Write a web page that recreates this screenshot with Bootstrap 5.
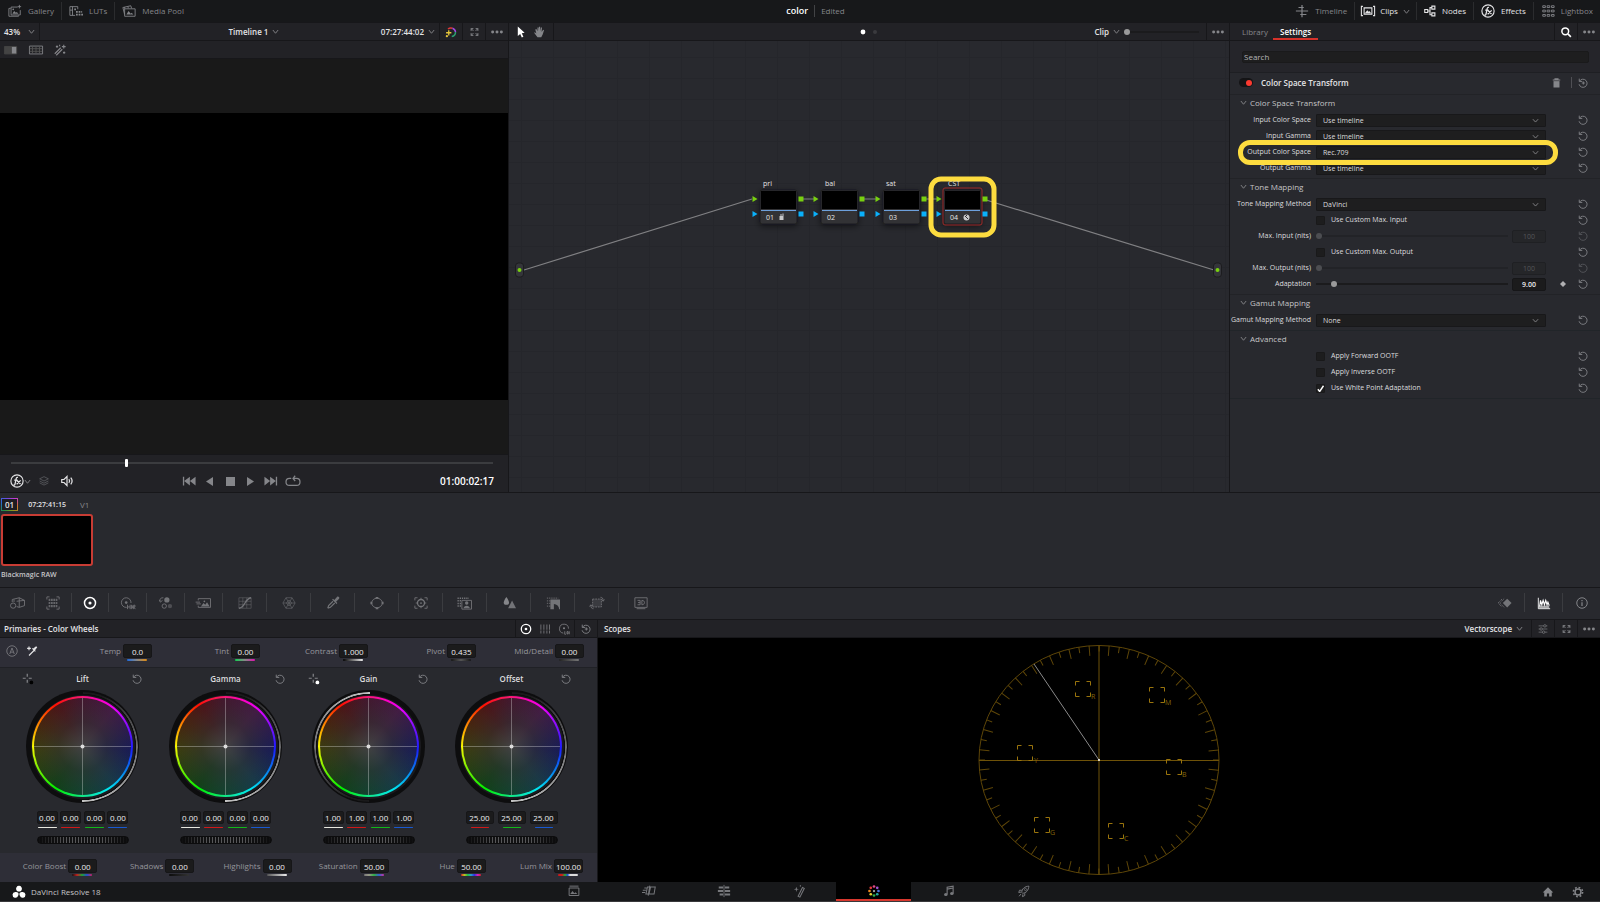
<!DOCTYPE html>
<html lang="en" data-bs-theme="dark">
<head>
<meta charset="utf-8">
<meta name="viewport" content="width=device-width, initial-scale=1">
<title>color - DaVinci Resolve 18</title>
<link href="https://cdn.jsdelivr.net/npm/bootstrap@5.3.0/dist/css/bootstrap.min.css" rel="stylesheet">
<style>
:root{--edge:#17171a;--bar:#222226;--panel:#28292e;--strip:#2e2e37;--dim:#85868a;--lit:#e4e4e6}
body{font:8px/12px "Open Sans","Noto Sans",sans-serif;background:var(--panel);color:#c4c4c6}
button,input,select{font:inherit;color:inherit}
button{background:none;border:0;padding:0;display:inline-flex;align-items:center;justify-content:center;flex:none}
a{color:inherit;text-decoration:none}
svg{display:block;flex:none;overflow:visible}
.ico{width:14px;height:14px;fill:none;stroke:currentColor;stroke-width:1}
.f{fill:currentColor;stroke:none}
.ico-s{width:12px;height:12px}
.ico-r{width:10px}
.ico-x{width:9px}
.chev{width:7px;height:7px;fill:none;stroke:#8a8a8e;stroke-width:1}
.semi{font-weight:600}
.lit{color:var(--lit)}
.white{color:#fff}
.dim{color:var(--dim)}
.faint{color:#6c6d72}
.topbar{height:22px;background:#17181a;padding-left:1px}
.topbar button{gap:6px;padding:0 7px;height:18px}
.topbar button+button{border-left:1px solid #2b2c2e}
.topbar .tight{gap:5px;padding:0 6px}
.project{gap:6px;padding-left:30px}
.project strong{font-size:9px}
.thirds{display:grid;grid-template-columns:1fr auto 1fr;align-items:center}
.bar{height:19px;background:var(--bar);border-top:1px solid var(--edge);border-bottom:1px solid var(--edge)}
.bar .cell{align-self:stretch;border-left:1px solid var(--edge);width:23px}
.bar .cell-end{width:1px}
.bar .modes{width:59px}
.upper{flex:1 1 470px;min-height:470px}
.viewer{flex:0 0 509px;border-right:1px solid var(--edge)}
.viewtools{height:18px;background:var(--bar);border-bottom:1px solid var(--edge);gap:11px;padding:0 4px}
.screen{background:#191919;flex:1;display:flex;align-items:center}
.screen div{background:#000;width:100%;aspect-ratio:509/287}
.transport{height:38px;background:var(--bar);border-top:1px solid var(--edge)}
.transport .thirds{height:18px;margin-top:4px;padding:0 14px 0 10px}
.timecode{font-size:10px}
.playgroup{gap:8px;padding-right:22px}
.graph{background-color:var(--panel);background-image:linear-gradient(90deg,#25262b 1px,transparent 1px),linear-gradient(#25262b 1px,transparent 1px);background-size:32px 21px;background-position:12px 16px;flex:1;min-height:0}
.graph svg{width:100%;height:100%}
.graph text{font-size:7px;fill:#e6e6e8;font-weight:500}
.inspector{flex:0 0 371px;background:var(--panel);border-left:1px solid var(--edge)}
.tab-on{border-bottom:2px solid #d6322a;align-self:stretch;padding:2px 7px 0}
.searchbox{padding:10px 11px 9px 12px;background:#25252a;border-bottom:1px solid #1e1f23}
.search{background:#1e1e1f;border:1px solid #1a1a1b;height:12px;border-radius:2px;padding:0 1px;width:100%}
.search::placeholder{color:#b4b4b6;opacity:1}
.fxhead{height:21px;padding:0 12px 2px 9px}
.fxhead h2{font-size:8px;margin:0}
.fxhead .vr{margin:4px 6px 4px 10px}
.toggle{width:14px;height:9px;border-radius:5px;background:#141416;display:flex;justify-content:flex-end;align-items:center;padding:1px}
.toggle i{width:6px;height:6px;border-radius:50%;background:#fb3a30}
.sect{border-top:1px solid #222327;padding-bottom:2px}
.sect h3{font:inherit;color:inherit;height:17px;margin:0 0 0 10px;padding-bottom:2px;display:flex;align-items:center;gap:3px}
.prop{display:grid;grid-template-columns:81px 230px 1fr;column-gap:5px;height:16px;align-items:center;margin:0 12px 0 0;font-size:7px;color:#dcdcde;font-weight:500}
.prop>:first-child{text-align:right;white-space:nowrap;font-weight:400}
.prop>:last-child{justify-self:end;display:flex;gap:12px;align-items:center;color:#85868a}
.prop select{appearance:none;width:100%;height:13px;line-height:11px;padding:0 6px;background:#1e1e1f url("data:image/svg+xml,%3Csvg xmlns='http://www.w3.org/2000/svg' viewBox='0 0 8 8'%3E%3Cpath d='M1 2.5 4 5.8 7 2.5' fill='none' stroke='%238a8a8e'/%3E%3C/svg%3E") no-repeat right 6px center/7px;border:1px solid #18181a;border-radius:1px}
.tick{display:flex;align-items:center;gap:6px}
.tick input{appearance:none;width:9px;height:9px;margin:0;background:#1d1d1e;border:1px solid #19191a;border-radius:1px}
.tick input:checked{background:#1d1d1e url("data:image/svg+xml,%3Csvg xmlns='http://www.w3.org/2000/svg' viewBox='0 0 8 8'%3E%3Cpath d='M1.3 4.5 3 6.6 6.6 1.2' fill='none' stroke='white' stroke-width='1.3'/%3E%3C/svg%3E") center/8px no-repeat}
input[type=range]{appearance:none;background:none;height:10px;margin:0;min-width:0}
input[type=range]::-webkit-slider-runnable-track{height:2px;background:#1b1b1d}
input[type=range]::-webkit-slider-thumb{appearance:none;width:6px;height:6px;border-radius:50%;background:#9a9a9b;margin-top:-2px}
input[type=range]:disabled::-webkit-slider-thumb{background:#4c4d51}
input[type=range]:disabled::-webkit-slider-runnable-track{background:#222327}
input[type=range].scrub{margin:3px 15px 0 11px}
input.scrub::-webkit-slider-runnable-track{background:#3b3c3f}
input.scrub::-webkit-slider-thumb{width:3px;height:8px;border-radius:1px;background:#fff;margin-top:-3px}
input[type=range].nodezoom{width:75px;margin:0 7px 0 4px}
.num{width:29px;height:14px;text-align:center;background:#1b1b1c;border:1px solid #161618;border-radius:2px;padding:0;color:#ececee}
.num-l{width:34px;height:13px}
.num:disabled{background:#252629;border-color:#1f2023;color:#55565a}
.clips{height:95px;border-top:1px solid var(--edge);padding:5px 1px 0}
.cliphead{height:13px;gap:10px}
.small-t{font-size:7px}
.clipno{padding:1px 3px;line-height:9px;border:1px solid;border-image:conic-gradient(from 45deg,#c43ad0,#d07a20,#7a9a20,#20904a,#2868d8,#7a4ae0,#c43ad0) 1;background:#1c1c22}
.thumb{width:92px;height:52px;background:#000;border:2px solid #c83c34;border-radius:3px;margin:3px 0}
.palettes{height:32px;border-top:1px solid var(--edge);color:#737478;padding-bottom:2px}
.palettes button{width:44px;height:19px;border-left:1px solid #3b3c40}
.palettes .n{width:37px}
.palettes .w{width:38px}
.palettes button.first{border-left:0;width:34px}
.palettes .right button:first-child{border-left:0}
.primaries{flex:0 0 598px;border-right:1px solid var(--edge)}
.strip{height:29px;background:var(--strip);padding:0 14px 3px 0}
.strip-top{padding:0 13px 3px 6px}
.strip-tools{width:38px}
.strip label{display:flex;justify-content:flex-end;align-items:center;gap:2px;color:#96969c;flex:1 1 0}
.fld{position:relative;display:block}
.fld::after{content:"";position:absolute;left:4px;right:5px;bottom:-3px;height:2px;border-radius:1px;background:var(--g)}
.fld .num{display:block}
.wheels{display:grid;grid-template-columns:repeat(4,1fr);padding:0 14px 0 11px;border-top:1px solid #202126;height:186px}
.wheelhead{display:grid;grid-template-columns:34px 1fr 34px;width:100%;height:22px;align-items:center;justify-items:center;color:#dcdcde}
.disc{width:113px;height:113px;border-radius:50%;background:#0d0d0e;display:grid;place-items:center}
.disc>*{grid-area:1/1;border-radius:50%}
.arc{width:110px;height:110px;background:conic-gradient(#1a1a1b 0 20deg,#7a7a7c 100deg,#c4c4c4 181deg,transparent 181deg);-webkit-mask:radial-gradient(closest-side,transparent 96%,#000 97%)}
.arc-up{transform:rotate(180deg)}
.gap-ring{width:104px;height:104px;background:#1b1b1f}
.hue{width:101px;height:101px;background:conic-gradient(#f81878,#ff00c0 20deg,#e800ff 42deg,#7a10ff 68deg,#1c1cff 92deg,#0a70f0 115deg,#00e8f0 150deg,#10e890 178deg,#00f000 212deg,#80f000 245deg,#f8f800 270deg,#ff8000 298deg,#ff1000 326deg,#f81878)}
.core{width:97px;height:97px;background:radial-gradient(closest-side,#424142,rgba(50,50,50,.55) 50%,transparent),conic-gradient(#42182f,#431c44 40deg,#231c50 80deg,#191c55 95deg,#163a4a 140deg,#124230 180deg,#124018 215deg,#3a3d10 265deg,#47240f 300deg,#4c1418 330deg,#42182f)}
.cross{width:97px;height:97px;stroke:#fff;stroke-opacity:.3}
.vals{display:flex;justify-content:space-between;width:92px;margin-top:8px}
.vals .num{width:21px;height:13px}
.vals .fld::after{left:1px;right:1px;bottom:-4px;height:1px}
.wide-vals .num{width:28px}
.wide-vals .fld::after{left:5px;right:5px}
.jog{width:92px;height:8px;border-radius:4px;margin-top:12px;background:linear-gradient(90deg,#0c0c0d,transparent 30%,transparent 70%,#0c0c0d),repeating-linear-gradient(90deg,#121213 0 1px,#58585a 1px 2px,#121213 2px 3px);border:1px solid #0c0c0d}
.scope{background:#000;flex:1;min-height:0}
.scope svg{width:100%;height:100%}
.scope text{font-size:7px;fill:#866508;stroke:none}
.scopebar{padding-left:6px}
.taskbar{height:20px;background:#17181a;border-bottom:1px solid #38393b;color:#77787c}
.brand{gap:5px;padding-left:12px;color:#c4c4c6}
.sys{gap:18px;padding-right:16px}
.taskbar nav{padding-right:3px}
.taskbar nav a{width:75px;height:19px;display:flex;align-items:center;justify-content:center;border-bottom:2px solid transparent}
.taskbar nav a.on{background:#000;border-color:#d8382e}
.mark-row{position:absolute;border:5px solid #fddc3f;border-radius:12px;pointer-events:none;left:-78px;right:-12px;top:-6px;bottom:-6px}
</style>
</head>
<body class="d-flex flex-column min-vh-100">
<svg width="0" height="0" class="position-absolute" aria-hidden="true">
<defs>
<symbol id="chev" viewBox="0 0 8 8"><path d="M1 2.3 4 6 7 2.3"/></symbol>
<symbol id="reset" viewBox="0 0 16 16"><path d="M2.500 5a6.500 6.500 0 1 1-.8 5M2 1V5.500H6.800" stroke-width="1.400"/></symbol>
<symbol id="resetdot" viewBox="0 0 16 16"><path d="M2.500 5a6.500 6.500 0 1 1-.8 5M2 1V5.500H6.800M6 8h5M8.500 5.500v5" stroke-width="1.400"/></symbol>
<symbol id="dots" viewBox="0 0 16 16"><circle class="f" cx="3" cy="8" r="1.700"/><circle class="f" cx="8" cy="8" r="1.700"/><circle class="f" cx="13" cy="8" r="1.700"/></symbol>
<symbol id="expand" viewBox="0 0 16 16"><path d="M2 6V2h4M10 2h4v4M14 10v4h-4M6 14H2v-4M2 2l4 4M14 2l-4 4M14 14l-4-4M2 14l4-4" stroke-width="1.700"/></symbol>
<symbol id="fx" viewBox="0 0 16 16"><circle cx="8" cy="8" r="7" stroke-width="1.300"/><path d="M3.800 12.500c1.500.8 1.900-.6 2.200-2l1-5c.3-1.600 1-2 2.200-1.600M4.800 7h3.700M8 7.500l4 4M12.200 7.300 7.600 11.700" stroke-width="1.500"/></symbol>
<symbol id="target" viewBox="0 0 16 16"><circle cx="8" cy="8" r="6.300" stroke-width="1.700"/><circle class="f" cx="8" cy="8" r="1.800"/></symbol>
<symbol id="pick" viewBox="0 0 16 16"><path d="M7 1v4M7 9v4M1 7h4M9 7h4" stroke-width="1.600"/></symbol>
</defs></svg>

<header class="topbar thirds">
 <div class="d-flex align-items-center">
  <button class="dim"><svg class="ico" viewBox="0 0 16 16"><path d="M3 5H1v9h11v-1M3.500 3.500H11M14 7v5.500H3.500v-9M13 1v4M11 3h4"/><path class="f" d="m5 11 2-3 2 2 1-1 2 2z"/><circle class="f" cx="6" cy="6" r="1"/></svg>Gallery</button>
  <button class="dim"><svg class="ico" viewBox="0 0 16 16"><path d="M7 13H1V3h9v3M4 3v10M1 7h3"/><path class="f" d="M6 5h2v2H6zM8 8h2v2H8zM11 8h2v2h-2zM8 11h2v2H8zM11 11h2v2h-2zM14 11h2v2h-2zM14 8h1v2h-1z"/></svg>LUTs</button>
  <button class="dim"><svg class="ico" viewBox="0 0 16 16"><path d="M3 12 1 4l9-2 1 3M3 5.500h12V14H3zM3 3.500v2M7 3v2"/><path class="f" d="m5 12 2.500-4L10 11l1-1 2 2z"/></svg>Media Pool</button>
 </div>
 <div class="project d-flex align-items-center"><strong class="semi white">color</strong><span class="vr"></span><span class="dim">Edited</span></div>
 <div class="d-flex align-items-center justify-content-end">
  <button class="dim"><svg class="ico" viewBox="0 0 16 16"><path d="M1 8h14M4 4h6M6 12h7M8 1v14" stroke-width="1.400"/></svg>Timeline</button>
  <button class="lit tight"><svg class="ico" viewBox="0 0 18 16"><path d="M2.500 2H.5v12h2M15.500 2h2v12h-2M4 4h10v8H4z" stroke-width="1.400"/><path class="f" d="m5 11 3-4 2 2 1-1 2 3z"/></svg>Clips <svg class="chev"><use href="#chev"/></svg></button>
  <button class="lit"><svg class="ico ico-s" viewBox="0 0 16 16"><path d="M5 8h3M8 8V3.500h2M8 8v5h2M1 6h4v4H1zM10.500 1.500h4v4h-4zM10.500 10.500h4v4h-4z" stroke-width="1.500"/></svg>Nodes</button>
  <button class="lit"><svg class="ico"><use href="#fx"/></svg>Effects</button>
  <button class="dim"><svg class="ico" viewBox="0 0 16 16"><path d="M2 2h3v2H2zM7 2h3v2H7zM12 2h3v2h-3zM2 7h3v2H2zM7 7h3v2H7zM12 7h3v2h-3zM2 12h3v2H2zM7 12h3v2H7zM12 12h3v2h-3z"/></svg>Lightbox</button>
 </div>
</header>

<main class="upper d-flex">
 <section class="viewer d-flex flex-column">
  <div class="bar thirds semi lit">
   <div class="d-flex align-items-center align-self-stretch"><button class="gap-2 ps-1 pe-1">43% <svg class="chev"><use href="#chev"/></svg></button><span class="cell cell-end"></span></div>
   <button class="gap-1">Timeline 1 <svg class="chev"><use href="#chev"/></svg></button>
   <div class="d-flex align-items-center align-self-stretch justify-content-end">
    <button class="gap-1 pe-1">07:27:44:02 <svg class="chev"><use href="#chev"/></svg></button>
    <button class="cell" aria-label="Bypass grades"><svg class="ico ico-s" viewBox="0 0 16 16"><path d="M4 4a6 6 0 0 1 6-1" stroke="#e03a3a" stroke-width="2"/><path d="M10 3a6 6 0 0 1 4 5" stroke="#a04ae0" stroke-width="2"/><path d="M14 8a6 6 0 0 1-5 6" stroke="#2aa070" stroke-width="2"/><path d="M5 5.500v7M1.500 9h7" stroke="#e6c63a" stroke-width="1.700"/><circle cx="2.500" cy="13.500" r="1.500" fill="#e6c63a" stroke="none"/></svg></button>
    <button class="cell dim" aria-label="Expand viewer"><svg class="ico ico-x"><use href="#expand"/></svg></button>
    <button class="cell dim" aria-label="Viewer options"><svg class="ico"><use href="#dots"/></svg></button>
   </div>
  </div>
  <div class="viewtools d-flex align-items-center dim">
   <button aria-label="Split screen"><svg class="ico" viewBox="0 0 16 12"><path d="M.5 2h14v8.500H.5z" stroke="#444" fill="#444"/><path class="f" d="M9 2.500h5v7.500H9z"/></svg></button>
   <button aria-label="Grid"><svg class="ico" viewBox="0 0 16 12"><path d="M.5 1.500h15v9H.5z"/><path d="M4 2v8M8 2v8M12 2v8M1 4.500h14M1 7.500h14" stroke="#555"/></svg></button>
   <button aria-label="Highlight"><svg class="ico ico-s" viewBox="0 0 16 16"><path d="m1 13 8-8M3 15l8-8M13 1v5M10.500 3.500h5M4 2v3M2.500 3.500h3M13.500 10v3M12 11.500h3M7.500 1v2" stroke-width="1.500"/></svg></button>
  </div>
  <div class="screen"><div></div></div>
  <div class="transport d-flex flex-column">
   <input type="range" class="scrub" aria-label="Playhead" min="0" max="1000" value="237">
   <div class="thirds">
    <div class="d-flex align-items-center gap-2">
     <button class="lit" aria-label="Effects"><svg class="ico"><use href="#fx"/></svg><svg class="chev"><use href="#chev"/></svg></button>
     <button class="faint" aria-label="Layers"><svg class="ico ico-r" viewBox="0 0 16 16"><path d="m8 1 7 3.500L8 8 1 4.500zM1 8l7 3.500L15 8M1 11l7 3.500 7-3.500"/></svg></button>
     <button class="lit ms-1" aria-label="Volume"><svg class="ico ico-s" viewBox="0 0 16 16"><path d="M1 6h3l4-4v12l-4-4H1zM10.500 5.500c1.200 1.500 1.200 3.500 0 5M13 3.500c2 2.500 2 6.500 0 9" stroke-width="1.600"/></svg></button>
    </div>
    <div class="playgroup d-flex align-items-center dim">
     <button aria-label="First frame"><svg class="ico" viewBox="0 0 16 12"><path class="f" d="M1 1h1.500v10H1zM9 1v10L2.500 6zM15.500 1v10L9 6z"/></svg></button>
     <button aria-label="Play reverse"><svg class="ico ico-s" viewBox="0 0 12 12"><path class="f" d="M9 2v9L2 6.500z"/></svg></button>
     <button aria-label="Stop"><svg class="ico ico-s" viewBox="0 0 12 12"><path class="f" d="M2 2h9v9H2z"/></svg></button>
     <button aria-label="Play"><svg class="ico ico-s" viewBox="0 0 12 12"><path class="f" d="M3 2v9l7-4.500z"/></svg></button>
     <button aria-label="Last frame"><svg class="ico" viewBox="0 0 16 12"><path class="f" d="M15 1h-1.500v10H15zM7 1v10l6.500-5zM.5 1v10L7 6z"/></svg></button>
     <button aria-label="Loop"><svg class="ico" viewBox="0 0 16 14"><path d="M6 4H4a3.500 3.500 0 0 0 0 8h8a3.500 3.500 0 0 0 0-8H8.500M10.500 1 8 4l2.500 3" stroke-width="1.400"/></svg></button>
    </div>
    <span class="timecode semi white text-end">01:00:02:17</span>
   </div>
  </div>
 </section>

 <section class="d-flex flex-column flex-grow-1" style="min-width:0">
  <div class="bar thirds">
   <div class="d-flex align-items-center align-self-stretch gap-2 ps-2">
    <button class="white" aria-label="Select"><svg class="ico" style="width:8px" viewBox="0 0 10 16"><path class="f" d="M1 1v12l3-2.500 2 4.500 2-1-2-4.300L9.500 9z"/></svg></button>
    <button class="dim" aria-label="Pan"><svg class="ico ico-s" viewBox="0 0 16 16"><path class="f" d="M3 4.500 4.500 4 6 7V2h1.500v5L8 1h1.500v6l1-5H12l-.5 6 2-3 1.200.6L13 11l-2 4H6L1.500 9l1-.8L4.500 10z"/></svg></button>
    <span class="cell cell-end"></span>
   </div>
   <svg width="18" height="6" viewBox="0 0 18 6"><circle cx="3" cy="3" r="2.400" fill="#fff"/><circle cx="15" cy="3" r="2" fill="#3a3a3e"/></svg>
   <div class="d-flex align-items-center align-self-stretch justify-content-end">
    <button class="semi lit gap-1">Clip <svg class="chev"><use href="#chev"/></svg></button>
    <input type="range" class="nodezoom" value="0" aria-label="Node zoom">
    <button class="cell dim" aria-label="Node options"><svg class="ico"><use href="#dots"/></svg></button>
   </div>
  </div>
  <div class="graph">
   <svg viewBox="0 0 720 451" role="img" aria-label="Node graph">
    <defs>
     <filter id="sh" x="-30%" y="-30%" width="160%" height="170%"><feDropShadow dx="0" dy="2" stdDeviation="3" flood-opacity=".5"/></filter>
     <g id="node"><rect width="37" height="34" rx="2" fill="#303136" stroke="#1c1c1f" filter="url(#sh)"/><rect x="1" y="1" width="35" height="18" fill="#000"/><path d="M1 20.500h35" stroke="#6da0dc"/></g>
     <g id="ports"><path d="M-7.500 6v6l5-3zM38.500 6.500h5v5h-5z" fill="#78d010"/><path d="M-7.500 21v6l5-3zM38.500 21.500h5v5h-5z" fill="#0ab0fa"/></g>
    </defs>
    <path d="M15 229 243 158M474 158 705 229M294 158h12M355 158h12M416 158h12" stroke="#808083" stroke-width="1.200" fill="none"/>
    <g fill="#34353a" stroke="#1c1c1f"><rect x="6.500" y="222" width="8" height="14" rx="3"/><rect x="704.500" y="222" width="8" height="14" rx="3"/></g>
    <g fill="#78d010"><circle cx="10.500" cy="229" r="2"/><circle cx="708.500" cy="229" r="2"/></g>
    <g transform="translate(251 149)"><use href="#node"/><use href="#ports"/><text x="3" y="-4">pri</text><text x="6" y="30">01</text><path d="M19.500 26h1v-2h1v2h1v-2.500h1V30h-4z" fill="#c8c8ca"/></g>
    <g transform="translate(312 149)"><use href="#node"/><use href="#ports"/><text x="4" y="-4">bal</text><text x="6" y="30">02</text></g>
    <g transform="translate(374 149)"><use href="#node"/><use href="#ports"/><text x="3" y="-4">sat</text><text x="6" y="30">03</text></g>
    <g transform="translate(435 149)"><use href="#node"/><rect x="-1" y="-2" width="39" height="37" rx="2" fill="none" stroke="#a02a28"/><use href="#ports"/><text x="4" y="-4">CST</text><text x="6" y="30">04</text><circle cx="22.500" cy="27.500" r="3" fill="#c8c8ca"/><path d="m21 26 3 3M22.500 25v1" stroke="#303136"/></g>
    <rect x="422" y="138" width="63" height="56" rx="10" fill="none" stroke="#fddc3f" stroke-width="5"/>
   </svg>
  </div>
 </section>

 <aside class="inspector">
  <div class="bar d-flex align-items-center ps-2" style="gap:5px">
   <button class="dim ps-1">Library</button>
   <button class="semi white tab-on">Settings</button>
   <div class="d-flex align-self-stretch ms-auto">
    <button class="cell white" aria-label="Search"><svg class="ico ico-s" viewBox="0 0 16 16"><circle cx="7" cy="7" r="4.500" stroke-width="2"/><path d="m10.500 10.500 4 4" stroke-width="2.200"/></svg></button>
    <button class="cell dim" aria-label="Options"><svg class="ico"><use href="#dots"/></svg></button>
   </div>
  </div>
  <div class="searchbox"><input class="search d-block" placeholder="Search" aria-label="Search"></div>
  <div class="fxhead d-flex align-items-center">
   <span class="toggle"><i></i></span><h2 class="semi lit ms-2">Color Space Transform</h2>
   <button class="dim ms-auto" aria-label="Delete"><svg class="ico ico-x" viewBox="0 0 12 14"><path d="M1 3h10M4 3V1.500h4V3" stroke-width="1.500"/><path class="f" d="M2 4.500h8V13H2z"/></svg></button>
   <span class="vr"></span>
   <button class="dim" aria-label="Reset"><svg class="ico ico-r"><use href="#resetdot"/></svg></button>
  </div>
  <section class="sect">
   <h3><svg class="chev"><use href="#chev"/></svg>Color Space Transform</h3>
   <div class="prop"><label for="ics">Input Color Space</label><select id="ics"><option>Use timeline</option></select><button aria-label="Reset"><svg class="ico ico-r"><use href="#reset"/></svg></button></div>
   <div class="prop"><label for="ig">Input Gamma</label><select id="ig"><option>Use timeline</option></select><button aria-label="Reset"><svg class="ico ico-r"><use href="#reset"/></svg></button></div>
   <div class="prop"><label for="ocs">Output Color Space</label><div class="position-relative z-1"><select id="ocs" class="d-block"><option>Rec.709</option></select><span class="mark-row"></span></div><button aria-label="Reset"><svg class="ico ico-r"><use href="#reset"/></svg></button></div>
   <div class="prop"><label for="og">Output Gamma</label><select id="og"><option>Use timeline</option></select><button aria-label="Reset"><svg class="ico ico-r"><use href="#reset"/></svg></button></div>
  </section>
  <section class="sect">
   <h3><svg class="chev"><use href="#chev"/></svg>Tone Mapping</h3>
   <div class="prop"><label for="tmm">Tone Mapping Method</label><select id="tmm"><option>DaVinci</option></select><button aria-label="Reset"><svg class="ico ico-r"><use href="#reset"/></svg></button></div>
   <div class="prop"><span></span><label class="tick"><input type="checkbox">Use Custom Max. Input</label><button aria-label="Reset"><svg class="ico ico-r"><use href="#reset"/></svg></button></div>
   <div class="prop"><label for="mi">Max. Input (nits)</label><div class="d-flex align-items-center gap-1"><input id="mi" type="range" class="flex-grow-1" value="0" disabled><input class="num num-l" value="100" disabled aria-label="Max. Input value"></div><button class="opacity-50" aria-label="Reset"><svg class="ico ico-r"><use href="#reset"/></svg></button></div>
   <div class="prop"><span></span><label class="tick"><input type="checkbox">Use Custom Max. Output</label><button aria-label="Reset"><svg class="ico ico-r"><use href="#reset"/></svg></button></div>
   <div class="prop"><label for="mo">Max. Output (nits)</label><div class="d-flex align-items-center gap-1"><input id="mo" type="range" class="flex-grow-1" value="0" disabled><input class="num num-l" value="100" disabled aria-label="Max. Output value"></div><button class="opacity-50" aria-label="Reset"><svg class="ico ico-r"><use href="#reset"/></svg></button></div>
   <div class="prop"><label for="ad">Adaptation</label><div class="d-flex align-items-center gap-1"><input id="ad" type="range" class="flex-grow-1" value="8"><input class="num num-l semi" value="9.00" aria-label="Adaptation value"></div><div><svg width="6" height="6" viewBox="0 0 6 6"><path d="m3 0 3 3-3 3-3-3z" fill="#b0b0b2"/></svg><button aria-label="Reset"><svg class="ico ico-r"><use href="#reset"/></svg></button></div></div>
  </section>
  <section class="sect">
   <h3><svg class="chev"><use href="#chev"/></svg>Gamut Mapping</h3>
   <div class="prop"><label for="gmm">Gamut Mapping Method</label><select id="gmm"><option>None</option></select><button aria-label="Reset"><svg class="ico ico-r"><use href="#reset"/></svg></button></div>
  </section>
  <section class="sect border-bottom border-dark">
   <h3><svg class="chev"><use href="#chev"/></svg>Advanced</h3>
   <div class="prop"><span></span><label class="tick"><input type="checkbox">Apply Forward OOTF</label><button aria-label="Reset"><svg class="ico ico-r"><use href="#reset"/></svg></button></div>
   <div class="prop"><span></span><label class="tick"><input type="checkbox">Apply Inverse OOTF</label><button aria-label="Reset"><svg class="ico ico-r"><use href="#reset"/></svg></button></div>
   <div class="prop"><span></span><label class="tick"><input type="checkbox" checked>Use White Point Adaptation</label><button aria-label="Reset"><svg class="ico ico-r"><use href="#reset"/></svg></button></div>
  </section>
 </aside>
</main>

<section class="clips">
 <div class="cliphead d-flex align-items-center semi lit"><span class="clipno">01</span><span class="small-t">07:27:41:15</span><span class="dim ms-1 fw-normal">V1</span></div>
 <div class="thumb"></div>
 <div class="semi small-t">Blackmagic RAW</div>
</section>

<div class="palettes d-flex align-items-center">
 <button class="first" aria-label="Camera Raw"><svg class="ico" style="width:17px" viewBox="0 0 18 16"><circle cx="4" cy="11" r="3"/><path d="M3 7V4l8-2 6 3v6l-6 2-3-1M11 2v4M8 6l9-1M11 6v7M5 4v3"/></svg></button>
 <button class="n" aria-label="Color Match"><svg class="ico" viewBox="0 0 16 16"><path d="M1 4V1h3M12 1h3v3M15 12v3h-3M4 15H1v-3"/><path d="M3 4.500h10M3 8h10M3 11.500h10" stroke-width="2.500" stroke-dasharray="2 .7" opacity=".8"/></svg></button>
 <button class="n white" aria-label="Primaries"><svg class="ico"><use href="#target"/></svg></button>
 <button class="w" aria-label="HDR"><svg class="ico" style="width:17px" viewBox="0 0 18 16"><path d="M8 13A5.500 5.500 0 1 1 13 8"/><circle class="f" cx="7.500" cy="7.500" r="1.500"/><path d="M9 10v5M12 10v5M9 12.500h3M13.500 10.500v4c2 0 2-4 0-4M16 15v-4.500h1.500v2H16l2 2.500"/></svg></button>
 <button class="w" aria-label="RGB Mixer"><svg class="ico" viewBox="0 0 16 16"><circle class="f" cx="9" cy="4.500" r="3"/><circle cx="6" cy="11.500" r="2.500"/><circle class="f" cx="12.500" cy="11.500" r="2.500" opacity=".5"/><path d="M1 6c0-3 1-4 4-4M.5 4.500 1.500 7 4 5"/></svg></button>
 <button class="w" aria-label="Motion Effects"><svg class="ico" style="width:17px" viewBox="0 0 18 16"><path d="M3 5V3h14v10H3v-2M0 7h5M1 9h5"/><path class="f" d="m6 12 3-4 2 2 2-3 3 5z"/><circle class="f" cx="10" cy="6" r="1"/></svg></button>
 <button aria-label="Curves"><svg class="ico" viewBox="0 0 16 16"><path d="M1 2h14v12H1zM5.500 2v12M10 2v12M1 6h14M1 10h14" opacity=".5"/><path d="M1 14C9 13 7 3 15 2" stroke-width="1.500"/></svg></button>
 <button aria-label="ColorSlice"><svg class="ico" viewBox="0 0 16 16"><path d="m4.500 2h7L15 8l-3.500 6h-7L1 8zM4.500 2l7 12M11.500 2l-7 12M1 8h14M8 4.500 11 8l-3 3.500L5 8z" opacity=".6"/></svg></button>
 <button aria-label="Qualifier"><svg class="ico" viewBox="0 0 16 16"><path d="m2 14 1-3 5-5M2 14l3-1 5-5" stroke-width="1.300"/><path class="f" d="m7 4 5 5 1-1-1.500-1.500L15 3c1-1.500-1-3-2.500-2L9.500 4.500 8 3z"/></svg></button>
 <button aria-label="Power Window"><svg class="ico" viewBox="0 0 16 16"><ellipse cx="8" cy="8" rx="6" ry="5.500"/><path class="f" d="M6.500 1h3v2h-3zM6.500 13h3v2h-3zM.5 6.500h2v3h-2zM13.500 6.500h2v3h-2z"/></svg></button>
 <button aria-label="Tracker"><svg class="ico" viewBox="0 0 16 16"><path d="M1 5V2h3M12 2h3v3M15 11v3h-3M4 14H1v-3M8 2v2M8 12v2M2 8h2M12 8h2"/><circle cx="8" cy="8" r="4" stroke-width="1.500"/><circle class="f" cx="8" cy="8" r="1"/></svg></button>
 <button aria-label="Magic Mask"><svg class="ico" style="width:17px" viewBox="0 0 18 16"><path d="M6 5h11v10H6z"/><path d="M1 2.500h13M1 5.500h5M1 8.500h5M1 11.500h5" stroke-width="1.800" stroke-dasharray="1.500 1"/><circle class="f" cx="11.500" cy="8" r="2"/><path class="f" d="M8 14c0-4 7-4 7 0z"/></svg></button>
 <button class="dim" aria-label="Blur"><svg class="ico" viewBox="0 0 16 16"><path class="f" d="M5 1c5 7 3 9 0 9S0 8 5 1z"/><path class="f" d="m11.500 5 4.500 9H7z" opacity=".8"/></svg></button>
 <button aria-label="Key"><svg class="ico" viewBox="0 0 16 16"><path class="f" d="M5 4h11v11h-1a6 6 0 0 0-6-6v6H5z"/><path d="M1 2.500h13M1 5.500h4M1 8.500h4M1 11.500h4" stroke-width="1.500" stroke-dasharray="1.500 1" opacity=".7"/></svg></button>
 <button aria-label="Sizing"><svg class="ico" viewBox="0 0 16 16"><path d="M3 3.500h10v9H3z" fill="#3a3b40" stroke-dasharray="2 1"/><path d="M12 1.500c2 0 3 1 3 4M13 4l2 2 1.500-2M4 14.500c-2 0-3-1-3-4M3 12l-2-2-1.500 2"/></svg></button>
 <button aria-label="3D"><svg class="ico" viewBox="0 0 16 16"><path d="M1 2h14v11H1zM3 14.500h10M4 5h3v5H4M4.500 7.500H7M9 5v5c4 0 4-5 0-5z"/></svg></button>
 <div class="right d-flex ms-auto">
  <button class="w" aria-label="Keyframes"><svg class="ico" viewBox="0 0 16 16"><path class="f" d="m10.500 3 5 5-5 5-5-5z"/><path d="M7 3 2 8l5 5M4.500 3.500 0 8l4.500 4.500" stroke-dasharray="1.500 1"/></svg></button>
  <button class="w white" aria-label="Scopes"><svg class="ico" viewBox="0 0 16 16"><path d="M1.500 2v12.500H15"/><path d="m3 12 1-7 1.500 5L7 5l1.500 5L10 5l1.500 5 1-3 1.500 4" stroke-width="1.300"/><path class="f" d="M2 14v-3h12v3z" opacity=".6"/></svg></button>
  <button class="w dim" aria-label="Info"><svg class="ico ico-s" viewBox="0 0 16 16"><circle cx="8" cy="8" r="7" stroke-width="1.300"/><path d="M8 7v5M8 4v1.500" stroke-width="1.600"/></svg></button>
 </div>
</div>

<div class="d-flex">
 <section class="primaries">
  <div class="bar d-flex align-items-center ps-1 semi lit">Primaries - Color Wheels
   <div class="cell modes ms-auto d-flex align-items-center justify-content-around">
    <button class="white" aria-label="Wheels"><svg class="ico ico-s"><use href="#target"/></svg></button>
    <button class="dim" aria-label="Bars"><svg class="ico ico-s" viewBox="0 0 16 16"><path d="M2.500 2v12M6.500 2v12M10.500 2v12M14 2v12" stroke-dasharray="7 1"/></svg></button>
    <button class="dim" aria-label="Log"><svg class="ico ico-s" viewBox="0 0 16 16"><path d="M7 13.500a6 6 0 1 1 7-6M9 11v4h1.500M12 11.500h1.500v3H12zM15 11v4"/><circle class="f" cx="8" cy="7" r="1.300"/></svg></button>
   </div>
   <button class="cell dim" aria-label="Reset all"><svg class="ico ico-r"><use href="#resetdot"/></svg></button>
  </div>
  <div class="strip strip-top d-flex align-items-center">
   <div class="strip-tools d-flex gap-2"><button class="dim" aria-label="Auto balance"><svg class="ico ico-s" viewBox="0 0 16 16"><circle cx="8" cy="8" r="7"/><path d="m5 12 3-8 3 8M6 9.500h4"/></svg></button>
   <button class="lit" aria-label="White balance"><svg class="ico ico-s" viewBox="0 0 16 16"><path d="M4 2v5M1.500 4.500h5M4 14l7-7" stroke-width="1.500"/><path class="f" d="m8 5 4 4 1-1-1-1 3-4-1.500-1.500-4 3L9 4z"/></svg></button></div>
   <label>Temp<span class="fld" style="--g:linear-gradient(90deg,#1a6ae0,#888,#e08a10)"><input class="num" value="0.0"></span></label>
   <label>Tint<span class="fld" style="--g:linear-gradient(90deg,#10d050,#888,#e010b0)"><input class="num" value="0.00"></span></label>
   <label>Contrast<span class="fld" style="--g:linear-gradient(90deg,#000,#eee)"><input class="num" value="1.000"></span></label>
   <label>Pivot<span class="fld" style="--g:linear-gradient(90deg,#151515,#555,#151515)"><input class="num" value="0.435"></span></label>
   <label>Mid/Detail<span class="fld" style="--g:linear-gradient(90deg,#222,#777)"><input class="num" value="0.00"></span></label>
  </div>
  <div class="wheels">
   <div class="d-flex flex-column align-items-center">
    <div class="wheelhead"><button class="dim" aria-label="Pick black point"><svg class="ico ico-s" viewBox="0 0 16 16"><use href="#pick"/><circle cx="12.500" cy="12.500" r="2.500" fill="#000" stroke="none"/></svg></button><span class="semi">Lift</span><button class="dim" aria-label="Reset Lift"><svg class="ico ico-r"><use href="#reset"/></svg></button></div>
    <div class="disc"><div class="arc"></div><div class="gap-ring"></div><div class="hue"></div><div class="core"></div><svg class="cross" viewBox="0 0 97 97"><path d="M48.500 0v97M0 48.500h97"/><circle cx="48.500" cy="48.500" r="2" fill="#ddd" stroke="none"/></svg></div>
    <div class="vals"><span class="fld" style="--g:#e8e8e0"><input class="num" value="0.00" aria-label="Lift Y"></span><span class="fld" style="--g:#d01818"><input class="num" value="0.00" aria-label="Lift R"></span><span class="fld" style="--g:#10b818"><input class="num" value="0.00" aria-label="Lift G"></span><span class="fld" style="--g:#1858d0"><input class="num" value="0.00" aria-label="Lift B"></span></div>
    <div class="jog"></div>
   </div>
   <div class="d-flex flex-column align-items-center">
    <div class="wheelhead"><span></span><span class="semi">Gamma</span><button class="dim" aria-label="Reset Gamma"><svg class="ico ico-r"><use href="#reset"/></svg></button></div>
    <div class="disc"><div class="arc"></div><div class="gap-ring"></div><div class="hue"></div><div class="core"></div><svg class="cross" viewBox="0 0 97 97"><path d="M48.500 0v97M0 48.500h97"/><circle cx="48.500" cy="48.500" r="2" fill="#ddd" stroke="none"/></svg></div>
    <div class="vals"><span class="fld" style="--g:#e8e8e0"><input class="num" value="0.00" aria-label="Gamma Y"></span><span class="fld" style="--g:#d01818"><input class="num" value="0.00" aria-label="Gamma R"></span><span class="fld" style="--g:#10b818"><input class="num" value="0.00" aria-label="Gamma G"></span><span class="fld" style="--g:#1858d0"><input class="num" value="0.00" aria-label="Gamma B"></span></div>
    <div class="jog"></div>
   </div>
   <div class="d-flex flex-column align-items-center">
    <div class="wheelhead"><button class="dim" aria-label="Pick white point"><svg class="ico ico-s" viewBox="0 0 16 16"><use href="#pick"/><circle cx="12.500" cy="12.500" r="2.500" fill="#fff" stroke="none"/></svg></button><span class="semi">Gain</span><button class="dim" aria-label="Reset Gain"><svg class="ico ico-r"><use href="#reset"/></svg></button></div>
    <div class="disc"><div class="arc arc-up"></div><div class="gap-ring"></div><div class="hue"></div><div class="core"></div><svg class="cross" viewBox="0 0 97 97"><path d="M48.500 0v97M0 48.500h97"/><circle cx="48.500" cy="48.500" r="2" fill="#ddd" stroke="none"/></svg></div>
    <div class="vals"><span class="fld" style="--g:#e8e8e0"><input class="num" value="1.00" aria-label="Gain Y"></span><span class="fld" style="--g:#d01818"><input class="num" value="1.00" aria-label="Gain R"></span><span class="fld" style="--g:#10b818"><input class="num" value="1.00" aria-label="Gain G"></span><span class="fld" style="--g:#1858d0"><input class="num" value="1.00" aria-label="Gain B"></span></div>
    <div class="jog"></div>
   </div>
   <div class="d-flex flex-column align-items-center">
    <div class="wheelhead"><span></span><span class="semi">Offset</span><button class="dim" aria-label="Reset Offset"><svg class="ico ico-r"><use href="#reset"/></svg></button></div>
    <div class="disc"><div class="arc"></div><div class="gap-ring"></div><div class="hue"></div><div class="core"></div><svg class="cross" viewBox="0 0 97 97"><path d="M48.500 0v97M0 48.500h97"/><circle cx="48.500" cy="48.500" r="2" fill="#ddd" stroke="none"/></svg></div>
    <div class="vals wide-vals"><span class="fld" style="--g:#d01818"><input class="num" value="25.00" aria-label="Offset R"></span><span class="fld" style="--g:#10b818"><input class="num" value="25.00" aria-label="Offset G"></span><span class="fld" style="--g:#1858d0"><input class="num" value="25.00" aria-label="Offset B"></span></div>
    <div class="jog"></div>
   </div>
  </div>
  <div class="strip d-flex align-items-center">
   <label>Color Boost<span class="fld" style="--g:linear-gradient(90deg,#111,#c02020,#20a030,#2050d0,#d02060)"><input class="num" value="0.00"></span></label>
   <label>Shadows<span class="fld" style="--g:linear-gradient(90deg,#0c0c0c,#333)"><input class="num" value="0.00"></span></label>
   <label>Highlights<span class="fld" style="--g:linear-gradient(90deg,#555,#eee)"><input class="num" value="0.00"></span></label>
   <label>Saturation<span class="fld" style="--g:linear-gradient(90deg,#777,#998,#30b040,#3060d0,#d030a0)"><input class="num" value="50.00"></span></label>
   <label>Hue<span class="fld" style="--g:linear-gradient(90deg,#e02020,#c0c020,#20c040,#20a0d0,#3030e0,#d020c0,#e02020)"><input class="num" value="50.00"></span></label>
   <label>Lum Mix<span class="fld" style="--g:linear-gradient(90deg,#d01818 20%,#20b030 35%,#2050d0 48%,#ddd 60%)"><input class="num" value="100.00"></span></label>
  </div>
 </section>

 <section class="d-flex flex-column flex-grow-1" style="min-width:0">
  <div class="bar scopebar d-flex flex-shrink-0 align-items-center semi lit"><span class="me-auto">Scopes</span>
   <button class="gap-1 pe-1">Vectorscope <svg class="chev me-1"><use href="#chev"/></svg></button>
   <button class="cell dim" aria-label="Scope settings"><svg class="ico ico-r" viewBox="0 0 16 16"><path d="M1 3h8M13 3h2M1 8h2M7 8h8M1 13h6M11 13h4"/><circle cx="11" cy="3" r="2"/><circle cx="5" cy="8" r="2"/><circle cx="9" cy="13" r="2"/></svg></button>
   <button class="cell dim" aria-label="Expand scopes"><svg class="ico ico-x"><use href="#expand"/></svg></button>
   <button class="cell dim" aria-label="Scope options"><svg class="ico"><use href="#dots"/></svg></button>
  </div>
  <div class="scope">
   <svg viewBox="0 0 1002 244" fill="none" stroke="#5e4608" role="img" aria-label="Vectorscope">
    <defs><path id="box" d="M0 4V0h4M11 0h4v4M15 11v4h-4M4 15H0v-4"/></defs>
    <ellipse cx="501" cy="122" rx="120" ry="114.500"/>
    <ellipse cx="501" cy="122" rx="115" ry="109.500" pathLength="36" stroke-width="10" stroke-dasharray=".05 .95" stroke-dashoffset="-.48"/>
    <ellipse cx="501" cy="122" rx="117" ry="111.500" pathLength="36" stroke-width="6" stroke-dasharray=".05 .95" stroke-dashoffset=".02"/>
    <path d="M501 7.500v229M381 122.500h240" stroke="#6e5208"/>
    <g stroke="#9a740c"><use href="#box" x="477.500" y="43.500"/><use href="#box" x="551.500" y="49.500"/><use href="#box" x="419.500" y="107.500"/><use href="#box" x="568.500" y="121.500"/><use href="#box" x="436.500" y="179.500"/><use href="#box" x="510.500" y="185.500"/></g>
    <text x="493" y="61">R</text><text x="567" y="67">M</text><text x="436" y="125">Y</text><text x="584" y="139">B</text><text x="452" y="197">G</text><text x="526" y="203">C</text>
    <path d="M436 26 501 122" stroke="#8a8a8a"/><circle cx="501" cy="122" r="1" fill="#fff" stroke="none"/>
   </svg>
  </div>
 </section>
</div>

<footer class="taskbar thirds">
 <div class="brand d-flex align-items-center"><svg class="ico white" viewBox="0 0 16 16"><path class="f" d="M8 1a3.300 3.300 0 0 1 3 4.800C10.500 7 9.500 7.500 8 7.500S5.500 7 5 5.800A3.300 3.300 0 0 1 8 1zM7.300 9.200c.3 1.200.3 2-.3 3.200A3.300 3.300 0 1 1 3.800 8c1.500 0 2.600.1 3.500 1.200zM8.700 9.200c-.3 1.200-.3 2 .3 3.200A3.300 3.300 0 1 0 12.200 8c-1.500 0-2.600.1-3.500 1.200z"/></svg>DaVinci Resolve 18</div>
 <nav class="d-flex">
  <a href="#media" aria-label="Media"><svg class="ico ico-s" viewBox="0 0 16 16"><path d="M1.500 4h13v10h-13zM2 1.500h12" stroke-width="1.300"/><path class="f" d="m3 12 3-4 2.500 3 1.500-1.500 2.500 2.500z"/></svg></a>
  <a href="#cut" aria-label="Cut"><svg class="ico" viewBox="0 0 18 16"><path d="m7 3-2 9h4l2-9zM11 3h6l-1.500 9H9M1 7h4M0 10h4M3 4h3M10 1 8 14" stroke-width="1.300"/></svg></a>
  <a href="#edit" aria-label="Edit"><svg class="ico" viewBox="0 0 16 16"><path d="M2 4h5M9 4h5M1 8h6M9 8h6M3 12h4M9 12h6" stroke-width="2.200"/><path d="M8 1v14"/></svg></a>
  <a href="#fusion" aria-label="Fusion"><svg class="ico" viewBox="0 0 16 16"><path d="m7 14 5-10 2 1-5 10z" stroke-width="1.200"/><path class="f" d="M5 3l.7 2.300L8 6l-2.300.7L5 9l-.7-2.300L2 6l2.300-.7zM9 1h1v2H9z"/></svg></a>
  <a href="#color" class="on" aria-label="Color"><svg width="12" height="12" viewBox="0 0 16 16"><circle cx="8" cy="2" r="1.800" fill="#e04a8a"/><circle cx="12.300" cy="3.700" r="1.800" fill="#a050d0"/><circle cx="14" cy="8" r="1.800" fill="#4a70e0"/><circle cx="12.300" cy="12.300" r="1.800" fill="#20a8a0"/><circle cx="8" cy="14" r="1.800" fill="#30b048"/><circle cx="3.700" cy="12.300" r="1.800" fill="#e0d030"/><circle cx="2" cy="8" r="1.800" fill="#f08a20"/><circle cx="3.700" cy="3.700" r="1.800" fill="#e03838"/><circle cx="8" cy="8" r="1.500" fill="#aaa"/></svg></a>
  <a href="#fairlight" aria-label="Fairlight"><svg class="ico ico-s" viewBox="0 0 16 16"><path d="M5.500 12V3l8-1.500V11M5.500 5.500l8-1.500" stroke-width="1.500"/><ellipse class="f" cx="3.800" cy="12.500" rx="2.400" ry="2"/><ellipse class="f" cx="11.800" cy="11.300" rx="2.400" ry="2"/></svg></a>
  <a href="#deliver" aria-label="Deliver"><svg class="ico ico-s" viewBox="0 0 16 16"><path d="M5 10C5 5 9 2 14.500 1.500 14 7 11 11 6 11zM5 7H2L1 10l3-.5M9 11v3l-3 1.500.5-3M4 12l-2.500 3" stroke-width="1.300"/><circle cx="10" cy="6" r="1.500"/></svg></a>
 </nav>
 <div class="sys d-flex align-items-center justify-content-end dim">
  <button aria-label="Project manager"><svg class="ico ico-s" viewBox="0 0 16 16"><path class="f" d="M8 1.500 15 8.500h-2V14H9.500v-4h-3v4H3V8.500H1z"/></svg></button>
  <button aria-label="Project settings"><svg class="ico ico-s" viewBox="0 0 16 16"><circle cx="8" cy="8" r="4" stroke-width="2"/><circle cx="8" cy="8" r="6.200" stroke-width="2" stroke-dasharray="2.400 2.470"/></svg></button>
 </div>
</footer>
<script src="https://cdn.jsdelivr.net/npm/bootstrap@5.3.0/dist/js/bootstrap.bundle.min.js"></script>
</body>
</html>
